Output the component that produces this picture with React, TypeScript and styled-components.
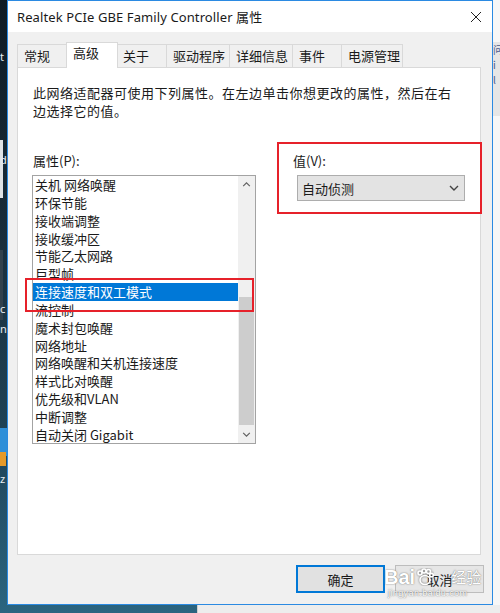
import React from "react";
import styled, { createGlobalStyle } from "styled-components";

const CJK = `"Noto Sans CJK SC", "Noto Sans", sans-serif`;

const GlobalStyle = createGlobalStyle`
  html, body { margin: 0; padding: 0; }
  body { width: 500px; height: 613px; overflow: hidden; font-family: ${CJK}; }
  * { box-sizing: border-box; }
`;

const Screen = styled.div`
  position: relative;
  width: 500px;
  height: 613px;
  display: grid;
  grid-template-columns: 7px 486px 7px;
  grid-template-rows: 605px 8px;
  background: linear-gradient(180deg, #0f1b24 0%, #182b38 35%, #1f4255 70%, #2b6580 100%);
  overflow: hidden;
`;

const DesktopStrip = styled.div`
  position: relative;
  overflow: hidden;
`;

const DesktopBit = styled.div<{ $top: number; $h: number; $bg: string; $w?: number }>`
  position: absolute;
  left: 0;
  top: ${(p) => p.$top}px;
  width: ${(p) => p.$w ?? 4}px;
  height: ${(p) => p.$h}px;
  background: ${(p) => p.$bg};
`;

const DesktopGlyph = styled.span<{ $top: number }>`
  position: absolute;
  left: 0;
  top: ${(p) => p.$top}px;
  font: 11px "Noto Sans", sans-serif;
  color: #e8eef2;
  line-height: 14px;
`;

const RightWindow = styled.div`
  background: #f7f7f7;
  display: flex;
  flex-direction: column;
  padding-top: 42px;
  overflow: hidden;
`;

const RightBlock = styled.div`
  height: 74px;
  background: #e6e6e6;
  font: 10px ${CJK};
  color: #4a5a8a;
  line-height: 15px;
`;

const BottomRow = styled.div`
  grid-column: 1 / 4;
  display: grid;
  grid-template-columns: 197px 1fr;
`;

const BottomRight = styled.div`
  background: #ededed;
  border-left: 1px solid #cfcfcf;
`;

const Dialog = styled.div`
  border: 1px solid #2b8ae2;
  background: #f0f0f0;
  display: flex;
  flex-direction: column;
`;

const TitleBar = styled.div`
  height: 31px;
  flex: none;
  background: #ffffff;
  display: flex;
  align-items: center;
  justify-content: space-between;
  padding: 0 10px 0 9px;
`;

const Title = styled.span`
  font: 13px "Noto Sans", ${CJK};
  color: #1a1a1a;
  letter-spacing: 0.1px;
`;

const Body = styled.div`
  flex: 1;
  display: flex;
  flex-direction: column;
  padding: 10px 10px 0 9px;
`;

const TabRow = styled.div`
  display: flex;
  align-items: flex-end;
  height: 25px;
  position: relative;
  z-index: 2;
`;

const Tab = styled.div<{ $w: number; $active?: boolean }>`
  width: ${(p) => p.$w + (p.$active ? 4 : 0)}px;
  height: ${(p) => (p.$active ? 26 : 23)}px;
  margin: 0 ${(p) => (p.$active ? "-2px" : "-1px")} ${(p) => (p.$active ? "-1px" : "0")} ${(p) => (p.$active ? "-2px" : "0")};
  position: relative;
  z-index: ${(p) => (p.$active ? 2 : 1)};
  background: ${(p) => (p.$active ? "#ffffff" : "#f0f0f0")};
  border: 1px solid #d9d9d9;
  border-bottom: none;
  padding: ${(p) => (p.$active ? "1px 0 0 6px" : "2px 0 0 6px")};
  font: 13px/18px ${CJK};
  color: #1a1a1a;
  white-space: nowrap;
`;

const Panel = styled.div`
  width: 464px;
  height: 488px;
  background: #ffffff;
  border: 1px solid #d9d9d9;
  padding: 16px 15px 0 14px;
  display: flex;
  flex-direction: column;
`;

const Description = styled.p`
  margin: 0 0 0 1px;
  width: 425px;
  font: 13px/18px ${CJK};
  letter-spacing: 0.5px;
  color: #1a1a1a;
`;

const Columns = styled.div`
  display: flex;
  margin-top: 32px;
`;

const LeftColumn = styled.div`
  width: 227px;
  display: flex;
  flex-direction: column;
`;

const RightColumn = styled.div`
  margin-left: 37px;
  display: flex;
  flex-direction: column;
`;

const FieldLabel = styled.div<{ $indent?: number }>`
  padding-left: ${(p) => p.$indent ?? 0}px;
  font: 13px/18px ${CJK};
  color: #1a1a1a;
`;

const ListBox = styled.div`
  margin-top: 5px;
  height: 269px;
  border: 1px solid #a3a3a3;
  display: flex;
  background: #fff;
`;

const Items = styled.div`
  flex: 1;
  overflow: hidden;
`;

const Item = styled.div<{ $selected?: boolean }>`
  height: 17.85px;
  line-height: 17.85px;
  padding-left: 2px;
  font-size: 13px;
  font-family: ${CJK};
  white-space: nowrap;
  color: ${(p) => (p.$selected ? "#ffffff" : "#1a1a1a")};
  background: ${(p) => (p.$selected ? "#0078d7" : "transparent")};
`;

const ScrollBar = styled.div`
  width: 17px;
  background: #f0f0f0;
  display: flex;
  flex-direction: column;
`;

const ScrollButton = styled.div`
  height: 17px;
  display: flex;
  align-items: center;
  justify-content: center;
`;

const Track = styled.div<{ $offset: number }>`
  flex: 1;
  padding-top: ${(p) => p.$offset}px;
`;

const Thumb = styled.div`
  height: 128px;
  margin: 0 1px;
  background: #cdcdcd;
`;

const Combo = styled.div`
  margin-top: 5px;
  margin-left: 4px;
  width: 168px;
  height: 26px;
  background: #e3e3e3;
  border: 1px solid #adadad;
  display: flex;
  align-items: center;
  justify-content: space-between;
  padding: 0 5px 0 4px;
  font: 13px ${CJK};
  color: #1a1a1a;
`;

const ButtonRow = styled.div`
  display: flex;
  justify-content: flex-end;
  gap: 10px;
  margin-top: 10px;
  margin-right: -2px;
`;

const Button = styled.button<{ $default?: boolean }>`
  width: 89px;
  height: 28px;
  background: ${(p) => (p.$default ? "#e1e1e1" : "#e6e6e6")};
  border: ${(p) => (p.$default ? "2px solid #0078d7" : "1px solid #bdbdbd")};
  font: 13px ${CJK};
  color: #1a1a1a;
  padding: 0;
`;

const RedBox = styled.div<{ $x: number; $y: number; $w: number; $h: number }>`
  position: absolute;
  left: ${(p) => p.$x}px;
  top: ${(p) => p.$y}px;
  width: ${(p) => p.$w}px;
  height: ${(p) => p.$h}px;
  border: 2px solid #e6212a;
  pointer-events: none;
`;

const Watermark = styled.div`
  position: absolute;
  left: 384px;
  top: 566px;
  display: flex;
  flex-direction: column;
  align-items: flex-start;
  pointer-events: none;
  color: #ffffff;
  text-shadow: 0 0 1px rgba(80, 80, 80, 0.8), 0 0 2px rgba(120, 120, 120, 0.5);
`;

const WatermarkMain = styled.div`
  display: flex;
  align-items: center;
  gap: 1px;
  font: bold 20px/22px "Liberation Sans", sans-serif;
`;

const WatermarkCn = styled.span`
  font: 15px/22px ${CJK};
  margin-left: 16px;
`;

const WatermarkUrl = styled.div`
  font: 9px/10px "Liberation Sans", sans-serif;
  margin-left: 4px;
  letter-spacing: 0.4px;
`;

const Chevron = ({ dir, size = 9, color = "#606060" }: { dir: "up" | "down"; size?: number; color?: string }) => (
  <svg width={size} height={Math.round(size * 0.6)} viewBox="0 0 10 6">
    <path
      d={dir === "down" ? "M1 1 L5 5 L9 1" : "M1 5 L5 1 L9 5"}
      fill="none"
      stroke={color}
      strokeWidth="1.4"
    />
  </svg>
);

const CloseIcon = () => (
  <svg width="12" height="12" viewBox="0 0 12 12">
    <path d="M1 1 L11 11 M11 1 L1 11" stroke="#222" strokeWidth="1" />
  </svg>
);

const Paw = () => (
  <svg width="18" height="18" viewBox="0 0 18 18">
    <g fill="none" stroke="#ffffff" strokeWidth="1.6" style={{ filter: "drop-shadow(0 0 1px rgba(80,80,80,0.8))" }}>
      <ellipse cx="9" cy="12" rx="5" ry="4.5" />
      <circle cx="4" cy="5" r="2" />
      <circle cx="8" cy="3" r="2" />
      <circle cx="12.5" cy="3.5" r="2" />
      <circle cx="15.5" cy="7" r="1.8" />
    </g>
  </svg>
);

const tabs: { label: string; w: number; active?: boolean }[] = [
  { label: "常规", w: 52 },
  { label: "高级", w: 48, active: true },
  { label: "关于", w: 51 },
  { label: "驱动程序", w: 64 },
  { label: "详细信息", w: 64 },
  { label: "事件", w: 50 },
  { label: "电源管理", w: 62 },
];

const properties = [
  "关机 网络唤醒",
  "环保节能",
  "接收端调整",
  "接收缓冲区",
  "节能乙太网路",
  "巨型帧",
  "连接速度和双工模式",
  "流控制",
  "魔术封包唤醒",
  "网络地址",
  "网络唤醒和关机连接速度",
  "样式比对唤醒",
  "优先级和VLAN",
  "中断调整",
  "自动关闭 Gigabit",
];

export default function App() {
  return (
    <>
      <GlobalStyle />
      <Screen>
        <DesktopStrip>
          <DesktopGlyph $top={50}>t</DesktopGlyph>
          <DesktopBit $top={140} $h={58} $bg="#dfe3e6" $w={3} />
          <DesktopGlyph $top={153}>d</DesktopGlyph>
          <DesktopBit $top={250} $h={70} $bg="#31414c" $w={3} />
          <DesktopGlyph $top={302}>c</DesktopGlyph>
          <DesktopGlyph $top={322}>n</DesktopGlyph>
          <DesktopBit $top={428} $h={28} $bg="#2f8fd8" $w={7} />
          <DesktopBit $top={452} $h={14} $bg="#e59a2a" $w={6} />
          <DesktopGlyph $top={472}>z</DesktopGlyph>
        </DesktopStrip>

        <Dialog>
          <TitleBar>
            <Title>Realtek PCIe GBE Family Controller 属性</Title>
            <CloseIcon />
          </TitleBar>
          <Body>
            <TabRow>
              {tabs.map((t) => (
                <Tab key={t.label} $w={t.w} $active={t.active}>
                  {t.label}
                </Tab>
              ))}
            </TabRow>
            <Panel>
              <Description>
                此网络适配器可使用下列属性。在左边单击你想更改的属性，然后在右边选择它的值。
              </Description>
              <Columns>
                <LeftColumn>
                  <FieldLabel $indent={1}>属性(P):</FieldLabel>
                  <ListBox>
                    <Items>
                      {properties.map((p, i) => (
                        <Item key={p} $selected={i === 6}>
                          {p}
                        </Item>
                      ))}
                    </Items>
                    <ScrollBar>
                      <ScrollButton>
                        <Chevron dir="up" />
                      </ScrollButton>
                      <Track $offset={104}>
                        <Thumb />
                      </Track>
                      <ScrollButton>
                        <Chevron dir="down" />
                      </ScrollButton>
                    </ScrollBar>
                  </ListBox>
                </LeftColumn>
                <RightColumn>
                  <FieldLabel>值(V):</FieldLabel>
                  <Combo>
                    <span>自动侦测</span>
                    <Chevron dir="down" size={10} color="#444" />
                  </Combo>
                </RightColumn>
              </Columns>
            </Panel>
            <ButtonRow>
              <Button $default>确定</Button>
              <Button>取消</Button>
            </ButtonRow>
          </Body>
        </Dialog>

        <RightWindow>
          <RightBlock>
            问
            <br />
            i
            <br />
            l
          </RightBlock>
        </RightWindow>

        <BottomRow>
          <div />
          <BottomRight />
        </BottomRow>

        <RedBox $x={25} $y={278} $w={229} $h={34} />
        <RedBox $x={277} $y={142} $w={205} $h={72} />

        <Watermark>
          <WatermarkMain>
            Bai
            <Paw />
            <WatermarkCn>经验</WatermarkCn>
          </WatermarkMain>
          <WatermarkUrl>jingyan.baidu.com</WatermarkUrl>
        </Watermark>
      </Screen>
    </>
  );
}
